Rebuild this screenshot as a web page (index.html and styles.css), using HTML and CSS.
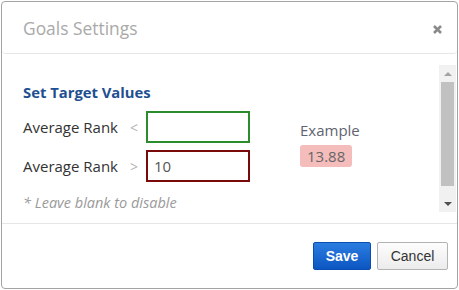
FILE: index.html
```html
<!DOCTYPE html>
<html>
	<head>
		<meta charset="UTF-8">
		<title>Goals Settings</title>
		<link rel="stylesheet" href="styles.css">
	</head>
	<body>
		<div class="dialog">
			<div class="dlg-head">
				<span class="dlg-title">Goals Settings</span>
				<a href="javascript:;" class="dlg-close">
					<svg width="9" height="9" viewBox="0 0 9 9"><path d="M1 1L8 8M8 1L1 8" stroke="#8a8a8a" stroke-width="2.6"/></svg>
				</a>
			</div>
			<div class="dlg-body">
				<div class="scroller">
					<div class="scroll-cont">
						<h3 class="sec-title">Set Target Values</h3>
						<div class="target">
							<div class="fields">
								<div class="row">
									<span class="lbl">Average Rank</span>
									<span class="sign">&lt;</span>
									<input type="text" class="ipt ipt-good" value="">
								</div>
								<div class="row">
									<span class="lbl">Average Rank</span>
									<span class="sign">&gt;</span>
									<input type="text" class="ipt ipt-bad" value="10">
								</div>
							</div>
							<div class="example">
								<div class="ex-lbl">Example</div>
								<span class="badge">13.88</span>
							</div>
						</div>
						<p class="hint">* Leave blank to disable</p>
					</div>
					<!-- fake scrollbar -->
					<div class="sbar">
						<div class="sbtn"><i class="tri-up"></i></div>
						<div class="strack"><div class="sthumb"></div></div>
						<div class="sbtn"><i class="tri-down"></i></div>
					</div>
				</div>
			</div>
			<div class="dlg-foot">
				<a href="javascript:;" class="btn btn-save">Save</a>
				<a href="javascript:;" class="btn btn-cancel">Cancel</a>
			</div>
		</div>
	</body>
</html>
```

FILE: styles.css
```css
body{
	margin: 0;
	background: #fff;
	font-family: "Open Sans", "Noto Sans", sans-serif;
}
a{
	text-decoration: none;
}
.dialog{
	margin: 1px 1px 0 1px;
	height: 286px;
	border: 1px solid #a3a3a3;
	border-radius: 4px;
	display: flex;
	flex-direction: column;
}
.dlg-head{
	height: 38px;
	padding: 13px 15px 0 21px;
	border-bottom: 1px solid #e6e6e6;
	border-radius: 4px;
	display: flex;
	justify-content: space-between;
	align-items: flex-start;
}
.dlg-title{
	font-size: 17.4px;
	line-height: 25px;
	color: #a9a9a9;
	margin-top: 1px;
}
.dlg-close{
	display: block;
	margin-top: 10px;
	line-height: 0;
}
.dlg-body{
	height: 147px;
	padding: 11px 1px 11px 0;
}
.scroller{
	height: 147px;
	display: flex;
}
.scroll-cont{
	flex: 1;
	padding: 17px 0 0 21px;
}
.sec-title{
	margin: 0;
	font-size: 14.8px;
	line-height: 20px;
	font-weight: bold;
	color: #1e4f91;
}
.target{
	margin-top: 9px;
	display: flex;
	align-items: flex-start;
}
.row{
	display: flex;
	align-items: center;
	margin-bottom: 7px;
}
.row:last-child{
	margin-bottom: 0;
}
.lbl{
	width: 107px;
	font-size: 15px;
	color: #333;
}
.sign{
	width: 16px;
	font-size: 14px;
	color: #b5b5b5;
}
.ipt{
	width: 104px;
	height: 32px;
	box-sizing: border-box;
	border: 2px solid #2a8c2a;
	padding: 0 6px;
	font-family: "Open Sans", "Noto Sans", sans-serif;
	font-size: 15px;
	color: #555;
	outline: none;
}
.ipt-bad{
	border-color: #7a0a0a;
}
.example{
	margin-left: 50px;
	padding-top: 10px;
}
.ex-lbl{
	font-size: 15px;
	line-height: 19px;
	color: #5f6470;
}
.badge{
	display: inline-block;
	margin-top: 5px;
	padding: 0 7px;
	height: 22px;
	line-height: 22px;
	font-size: 15px;
	color: #666;
	background-color: #f5bcbc;
	border-radius: 3px;
}
.hint{
	margin: 12px 0 0 0;
	font-size: 14.5px;
	line-height: 18px;
	font-style: italic;
	color: #9a9a9a;
}
.sbar{
	width: 17px;
	background-color: #f1f1f1;
	display: flex;
	flex-direction: column;
}
.sbtn{
	height: 17px;
	display: flex;
	align-items: center;
	justify-content: center;
}
.strack{
	flex: 1;
}
.sthumb{
	margin: 0 2px;
	height: 104px;
	background-color: #c1c1c1;
}
.tri-up{
	width: 0;
	height: 0;
	border-left: 4px solid transparent;
	border-right: 4px solid transparent;
	border-bottom: 4px solid #a3a3a3;
}
.tri-down{
	width: 0;
	height: 0;
	border-left: 4px solid transparent;
	border-right: 4px solid transparent;
	border-top: 4px solid #505050;
}
.dlg-foot{
	border-top: 1px solid #e6e6e6;
	padding: 18px 9px 0 0;
	display: flex;
	justify-content: flex-end;
	gap: 6px;
}
.btn{
	display: block;
	height: 28px;
	box-sizing: border-box;
	line-height: 26px;
	font-family: "Liberation Sans", Arial, sans-serif;
	font-size: 14px;
	text-align: center;
	border-radius: 2px;
}
.btn-save{
	width: 58px;
	color: #fff;
	font-weight: bold;
	background: linear-gradient(#2b7de0, #0c56c2);
	border: 1px solid #0a4db0;
}
.btn-cancel{
	width: 71px;
	color: #333;
	background: linear-gradient(#fdfdfd, #ececec);
	border: 1px solid #b3b3b3;
}
```
